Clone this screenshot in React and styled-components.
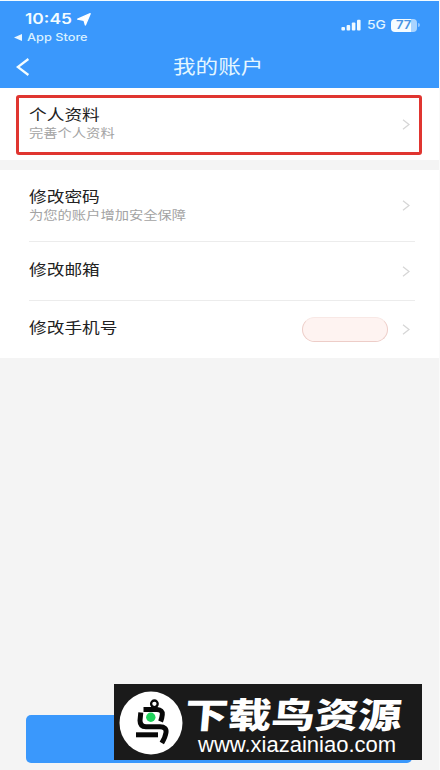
import React from "react";
import styled, { createGlobalStyle } from "styled-components";

const settings = [
  {
    id: "password",
    title: "修改密码",
    hint: "为您的账户增加安全保障",
    height: 71,
  },
  { id: "email", title: "修改邮箱", height: 59 },
  { id: "phone", title: "修改手机号", height: 58, badge: true },
];

const ChevronRight = () => (
  <Chevron viewBox="0 0 8 11">
    <path d="M1 0.8 L7 5.5 L1 10.2" />
  </Chevron>
);

const StatusBar = () => (
  <Status>
    <Clock>
      <TimeRow>
        <Time>10:45</Time>
        <svg width="14" height="13" viewBox="0 0 14 13">
          <path
            d="M13.2 0.7 L8.4 12 L7 7.3 L0.7 6.2 Z"
            fill="#fff"
            stroke="#fff"
            strokeWidth="1.3"
            strokeLinejoin="round"
          />
        </svg>
      </TimeRow>
      <BackToApp>
        <svg width="8" height="7" viewBox="0 0 8 7">
          <path d="M0 3.5 L8 0 V7 Z" fill="#eaf7ff" />
        </svg>
        <AppName>App Store</AppName>
      </BackToApp>
    </Clock>
    <Signals>
      <svg width="20" height="12" viewBox="0 0 20 12" fill="#f0faff">
        <rect x="0.4" y="8" width="3.6" height="3.6" rx="1" />
        <rect x="5.6" y="6" width="3.6" height="5.6" rx="1" />
        <rect x="10.8" y="3.6" width="3.6" height="8" rx="1" />
        <rect x="16" y="0.8" width="3.6" height="10.8" rx="1" />
      </svg>
      <Network>5G</Network>
      <Battery>
        <span>77</span>
      </Battery>
      <BatteryTip />
    </Signals>
  </Status>
);

const Item = ({ title, hint, height, badge }) => (
  <Row $height={height}>
    <Labels $raised={!hint}>
      <ItemTitle>{title}</ItemTitle>
      {hint && <ItemHint>{hint}</ItemHint>}
    </Labels>
    {badge && <Badge />}
    <ChevronRight />
  </Row>
);

const BirdLogo = () => (
  <svg width="64" height="64" viewBox="0 0 64 64">
    <circle cx="32" cy="32" r="31.5" fill="#fff" />
    <g fill="none" stroke="#080808" strokeWidth="5">
      <circle cx="35.4" cy="12.8" r="3.3" strokeWidth="2.3" />
      <path d="M24.5 18.6 H38 Q43.8 19 43.3 23.5 Q43 27 41.6 30.5" />
      <path d="M21.8 21.5 L21 29.5 Q21 35.6 27 35.8 H41 Q47.8 36 47 41.5 Q46.4 46 42.8 52" />
      <path d="M17 43.8 H39" />
    </g>
    <circle cx="31.8" cy="26.3" r="4.7" fill="#1fd35b" />
  </svg>
);

export default function App() {
  return (
    <>
      <GlobalStyle />
      <Screen>
        <Header>
          <StatusBar />
          <NavBar>
            <BackIcon viewBox="0 0 14 18">
              <path d="M12.4 1 L1.8 9 L12.4 17" />
            </BackIcon>
            <PageTitle>我的账户</PageTitle>
          </NavBar>
        </Header>
        <ProfileSection>
          <Profile>
            <Labels>
              <ItemTitle>个人资料</ItemTitle>
              <ItemHint>完善个人资料</ItemHint>
            </Labels>
            <ChevronRight />
          </Profile>
        </ProfileSection>
        <List>
          {settings.map(({ id, ...item }) => (
            <Item key={id} {...item} />
          ))}
        </List>
        <Footer>
          <SubmitButton type="button" />
          <Watermark>
            <BirdLogo />
            <Brand>
              <BrandName>下载鸟资源</BrandName>
              <BrandUrl>www.xiazainiao.com</BrandUrl>
            </Brand>
          </Watermark>
        </Footer>
      </Screen>
    </>
  );
}

const GlobalStyle = createGlobalStyle`
  * {
    box-sizing: border-box;
  }
  body {
    margin: 0;
    background: #f4f4f4;
    font-family: Inter, "Noto Sans CJK SC", sans-serif;
  }
  svg {
    display: block;
    flex: none;
  }
`;

const Screen = styled.div`
  display: flex;
  flex-direction: column;
  width: 440px;
  height: 770px;
  overflow: hidden;
  border-top: 1px solid #f3fbff;
  border-right: 1px solid #fafafa;
  background: #f4f4f4;
`;

const Header = styled.header`
  height: 87px;
  flex: none;
  background: #3a98fc;
`;

const Status = styled.div`
  display: flex;
  justify-content: space-between;
  height: 46px;
  padding: 9px 19px 0 14px;
`;

const Clock = styled.div`
  display: flex;
  flex-direction: column;
`;

const TimeRow = styled.div`
  display: flex;
  align-items: center;
  gap: 4px;
  height: 18px;
  padding-left: 11px;
`;

const Time = styled.span`
  width: 48px;
  font-size: 14.5px;
  font-weight: 600;
  line-height: 18px;
  color: #f3fcff;
  transform: scaleX(1.2);
  transform-origin: left;
`;

const BackToApp = styled.div`
  display: flex;
  align-items: center;
  gap: 5px;
  height: 18px;
`;

const AppName = styled.span`
  font-size: 11px;
  font-weight: 500;
  line-height: 18px;
  white-space: nowrap;
  color: #d9f0ff;
  transform: scaleX(1.16);
  transform-origin: left;
`;

const Signals = styled.div`
  display: flex;
  align-items: center;
  height: 18px;
  margin-top: 6px;
`;

const Network = styled.span`
  width: 24px;
  margin-left: 6px;
  font-size: 11.5px;
  font-weight: 500;
  color: #e1f4ff;
  transform: scaleX(1.2);
  transform-origin: left;
`;

const Battery = styled.div`
  display: flex;
  align-items: center;
  justify-content: center;
  width: 26px;
  height: 13px;
  border-radius: 4px;
  background: linear-gradient(90deg, #f5fcff 77%, #a9d4ff 77%);
  font-size: 11.5px;
  font-weight: 600;
  color: #4795e4;

  span {
    transform: scaleX(1.15);
  }
`;

const BatteryTip = styled.i`
  width: 2px;
  height: 4px;
  margin-left: 1px;
  border-radius: 0 2px 2px 0;
  background: #8fc6ff;
`;

const NavBar = styled.div`
  display: flex;
  align-items: center;
  height: 41px;
  padding-left: 16px;
`;

const BackIcon = styled.svg`
  width: 14px;
  height: 18px;
  margin-bottom: 2px;
  fill: none;
  stroke: #f3fdff;
  stroke-width: 2.2;
`;

const PageTitle = styled.h1`
  margin: 1px 0 0 143px;
  font-size: 19px;
  font-weight: 400;
  line-height: 28px;
  color: #e4f6ff;
  transform: scaleX(1.19);
  transform-origin: left;
`;

const ProfileSection = styled.section`
  height: 82px;
  flex: none;
  padding: 7px 17px 5px 16px;
  border-bottom: 10px solid #f4f4f4;
  background: #fff;
`;

const Profile = styled.div`
  display: flex;
  align-items: center;
  height: 60px;
  padding: 0 9px 2px 10px;
  border: 3px solid #e03530;
  border-radius: 3px;
`;

const Labels = styled.div`
  display: flex;
  flex: 1;
  flex-direction: column;
  align-items: flex-start;
  padding-bottom: ${(props) => (props.$raised ? 3 : 0)}px;
`;

const ItemTitle = styled.span`
  font-size: 15px;
  font-weight: 400;
  line-height: 20px;
  color: #222;
  transform: scaleX(1.18);
  transform-origin: left;
`;

const ItemHint = styled.span`
  font-size: 12px;
  line-height: 18px;
  color: #a3a3a3;
  transform: scaleX(1.19);
  transform-origin: left;
`;

const Chevron = styled.svg`
  width: 8px;
  height: 11px;
  fill: none;
  stroke: #d6d6d6;
  stroke-width: 1.3;
`;

const List = styled.section`
  flex: none;
  height: 188px;
  padding: 0 24px 0 29px;
  background: #fff;
`;

const Row = styled.div`
  display: flex;
  align-items: center;
  height: ${(props) => props.$height}px;
  padding-right: 5px;

  & + & {
    border-top: 1px solid #ececec;
  }
`;

const Badge = styled.div`
  width: 86px;
  height: 25px;
  margin-right: 14px;
  border: 1.5px solid #edcdc8;
  border-top-color: #f8e8e5;
  border-radius: 13px;
  background: #fef3f1;
`;

const Footer = styled.footer`
  position: relative;
  margin: auto 27px 7px 26px;
`;

const SubmitButton = styled.button`
  display: block;
  width: 100%;
  height: 48px;
  padding: 0;
  border: 0;
  border-radius: 5px;
  background: #3a98fc;
`;

/* floats over the submit button */
const Watermark = styled.div`
  position: absolute;
  left: 88px;
  bottom: 3px;
  display: flex;
  align-items: center;
  width: 308px;
  height: 76px;
  padding: 2px 0 0 5px;
  background: #1a1a1a;
`;

const Brand = styled.div`
  display: flex;
  flex-direction: column;
  align-items: flex-start;
  padding: 5px 0 0 2px;
`;

const BrandName = styled.strong`
  font-family: "Noto Sans CJK SC", sans-serif;
  font-size: 35px;
  font-weight: 900;
  line-height: 38px;
  white-space: nowrap;
  color: #fff;
  transform: scaleX(1.24) skewX(-4deg);
  transform-origin: left;
`;

const BrandUrl = styled.span`
  margin-left: 13px;
  font-family: "Liberation Sans", Arial, sans-serif;
  font-size: 22px;
  line-height: 26px;
  color: #fff;
`;
